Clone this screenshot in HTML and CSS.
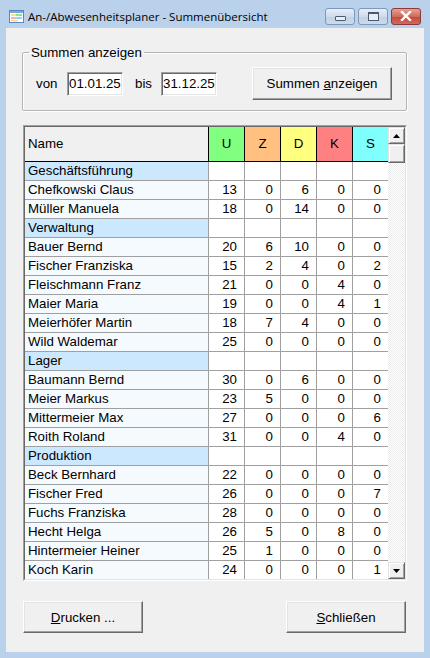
FILE: index.html
```html
<!DOCTYPE html>
<html lang="de">
<head>
    <meta charset="UTF-8">
    <meta name="viewport" content="width=device-width, initial-scale=1.0">
    <title>An-/Abwesenheitsplaner - Summenübersicht</title>
    <link rel="stylesheet" href="styles.css">
</head>
<body>
    <div class="window">
        <!-- Title bar -->
        <div class="titlebar">
            <svg class="app-icon" width="15" height="13" viewBox="0 0 15 13">
                <rect x="0.5" y="0.5" width="14" height="12" fill="#fff" stroke="#5b87c0"/>
                <rect x="1" y="1" width="13" height="2" fill="#7fa7dc"/>
                <rect x="2" y="4" width="5" height="2" fill="#ffe27a"/>
                <rect x="7" y="4" width="6" height="2" fill="#8fe08f"/>
                <rect x="2" y="7" width="4" height="2" fill="#ffb0a8"/>
                <rect x="6" y="7" width="7" height="2" fill="#8fd8f0"/>
                <rect x="2" y="10" width="7" height="1.5" fill="#ffd9a0"/>
            </svg>
            <span class="title">An-/Abwesenheitsplaner - Summenübersicht</span>
            <div class="caption-buttons">
                <span class="cap-btn"><span class="glyph-min"></span></span>
                <span class="cap-btn"><span class="glyph-max"></span></span>
                <span class="cap-btn cap-close">
                    <svg width="12" height="10" viewBox="0 0 12 10">
                        <path d="M2 1 L10 9 M10 1 L2 9" stroke="#fff" stroke-width="2.4" stroke-linecap="square"/>
                    </svg>
                </span>
            </div>
        </div>

        <div class="client">
            <!-- Date range -->
            <fieldset class="group">
                <legend>Summen anzeigen</legend>
                <div class="range-row">
                    <span class="lbl lbl-von">von</span>
                    <input class="date-input" type="text" value="01.01.25">
                    <span class="lbl lbl-bis">bis</span>
                    <input class="date-input" type="text" value="31.12.25">
                    <button class="btn btn-show">Summen <u>a</u>nzeigen</button>
                </div>
            </fieldset>

            <!-- Sums grid -->
            <div class="grid-frame">
                <div class="grid-inner">
                    <div class="grid-scroll">
                        <table class="sums">
                            <thead>
                                <tr>
                                    <th class="col-name">Name</th>
                                    <th class="col-u">U</th>
                                    <th class="col-z">Z</th>
                                    <th class="col-d">D</th>
                                    <th class="col-k">K</th>
                                    <th class="col-s">S</th>
                                </tr>
                            </thead>
                            <tbody id="rows"></tbody>
                        </table>
                    </div>
                    <div class="scrollbar">
                        <div class="sb-btn">
                            <svg width="7" height="4" viewBox="0 0 7 4"><polygon points="3.5,0 7,4 0,4" fill="#000"/></svg>
                        </div>
                        <div class="sb-thumb"></div>
                        <div class="sb-track"></div>
                        <div class="sb-btn">
                            <svg width="7" height="4" viewBox="0 0 7 4"><polygon points="0,0 7,0 3.5,4" fill="#000"/></svg>
                        </div>
                    </div>
                </div>
            </div>

            <!-- Footer buttons -->
            <div class="footer">
                <button class="btn btn-footer"><u>D</u>rucken ...</button>
                <button class="btn btn-footer"><u>S</u>chließen</button>
            </div>
        </div>
    </div>

    <script>
        // Groups with their employees: U, Z, D, K, S
        const data = [
            ['Geschäftsführung', [
                ['Chefkowski Claus', 13, 0, 6, 0, 0],
                ['Müller Manuela', 18, 0, 14, 0, 0]
            ]],
            ['Verwaltung', [
                ['Bauer Bernd', 20, 6, 10, 0, 0],
                ['Fischer Franziska', 15, 2, 4, 0, 2],
                ['Fleischmann Franz', 21, 0, 0, 4, 0],
                ['Maier Maria', 19, 0, 0, 4, 1],
                ['Meierhöfer Martin', 18, 7, 4, 0, 0],
                ['Wild Waldemar', 25, 0, 0, 0, 0]
            ]],
            ['Lager', [
                ['Baumann Bernd', 30, 0, 6, 0, 0],
                ['Meier Markus', 23, 5, 0, 0, 0],
                ['Mittermeier Max', 27, 0, 0, 0, 6],
                ['Roith Roland', 31, 0, 0, 4, 0]
            ]],
            ['Produktion', [
                ['Beck Bernhard', 22, 0, 0, 0, 0],
                ['Fischer Fred', 26, 0, 0, 0, 7],
                ['Fuchs Franziska', 28, 0, 0, 0, 0],
                ['Hecht Helga', 26, 5, 0, 8, 0],
                ['Hintermeier Heiner', 25, 1, 0, 0, 0],
                ['Koch Karin', 24, 0, 0, 0, 1]
            ]]
        ];

        const tbody = document.getElementById('rows');
        let html = '';
        data.forEach(([group, people]) => {
            html += '<tr class="group-row"><td class="name">' + group + '</td>' +
                '<td></td><td></td><td></td><td></td><td></td></tr>';
            people.forEach(p => {
                html += '<tr><td class="name">' + p[0] + '</td>';
                for (let i = 1; i < p.length; i++) {
                    html += '<td class="num">' + p[i] + '</td>';
                }
                html += '</tr>';
            });
        });
        tbody.innerHTML = html;
    </script>
</body>
</html>
```

FILE: styles.css
```css
/* Reset */
html, body {
    margin: 0;
    padding: 0;
}

body {
    width: 430px;
    height: 658px;
    overflow: hidden;
    background: #b9d1ea;
    font-family: "Liberation Sans", Arial, sans-serif;
    font-size: 13.3px;
    color: #000;
}

.window {
    display: flex;
    flex-direction: column;
    height: 658px;
}

/* Title bar */
.titlebar {
    height: 28px;
    box-sizing: border-box;
    padding: 4px 9px 0 9px;
    display: flex;
    align-items: center;
}

.app-icon {
    margin-right: 4px;
    flex-shrink: 0;
}

.title {
    font-family: "Open Sans", "Noto Sans", sans-serif;
    font-size: 11.5px;
    color: #000;
}

.caption-buttons {
    margin-left: auto;
    display: flex;
    gap: 3px;
}

.cap-btn {
    width: 30px;
    height: 17px;
    box-sizing: border-box;
    border: 1px solid #7d98b8;
    border-radius: 3px;
    background: linear-gradient(#e6eef8, #cfdcec 50%, #bfd1e6 51%, #ccdbec);
    display: flex;
    align-items: center;
    justify-content: center;
}

.cap-close {
    border-color: #8a3a3a;
    background: linear-gradient(#e5a092, #d26a5a 50%, #c2493a 51%, #cf6a5c);
}

.glyph-min {
    width: 9px;
    height: 3px;
    margin-top: 5px;
    border: 1px solid #4a5a70;
    border-radius: 1px;
    background: #e8eef5;
}

.glyph-max {
    box-sizing: border-box;
    width: 11px;
    height: 9px;
    border: 1px solid #4a5a70;
    border-top-width: 2px;
    background: #e8eef5;
}

/* Client area */
.client {
    flex: 1;
    margin: 0 6px 6px;
    background: #f0f0f0;
    padding: 17px 17px 0 16px;
    display: flex;
    flex-direction: column;
}

/* Group box */
.group {
    margin: 0;
    padding: 0;
    border: 1px solid #b4b4b4;
    border-radius: 2px;
    box-shadow: inset 1px 1px #fff, 1px 1px #fff;
}

.group legend {
    margin-left: 6px;
    padding: 0 2px;
    line-height: 15px;
}

.range-row {
    display: flex;
    align-items: center;
    padding: 7px 14px 10px 13px;
}

.lbl-von {
    width: 31px;
}

.lbl-bis {
    width: 26px;
    margin-left: 12px;
}

.date-input {
    width: 56px;
    height: 24px;
    box-sizing: border-box;
    margin: 0;
    padding: 0 0 0 1px;
    font: inherit;
    color: #000;
    background: #fff;
    border: 1px solid;
    border-color: #a0a0a0 #fff #fff #a0a0a0;
    box-shadow: inset 1px 1px #696969, inset -1px -1px #e3e3e3;
    outline: none;
}

/* Buttons */
.btn {
    font: inherit;
    color: #000;
    background: #f0f0f0;
    border: 1px solid;
    border-color: #fff #696969 #696969 #fff;
    box-shadow: inset -1px -1px #a0a0a0, inset 1px 1px #e3e3e3;
    padding: 0;
    margin: 0;
}

.btn-show {
    margin-left: auto;
    width: 140px;
    height: 33px;
}

/* Grid */
.grid-frame {
    margin: 14px 0 0 1px;
    border: 1px solid;
    border-color: #a0a0a0 #fff #fff #a0a0a0;
}

.grid-inner {
    display: flex;
    height: 452px;
    border: 1px solid;
    border-color: #696969 #e3e3e3 #e3e3e3 #696969;
    background: #fff;
    overflow: hidden;
}

.grid-scroll {
    flex: 1;
    overflow: hidden;
}

.sums {
    table-layout: fixed;
    border-collapse: separate;
    border-spacing: 0;
    width: 364px;
}

.sums th,
.sums td {
    padding: 0;
    font-weight: normal;
    white-space: nowrap;
    overflow: hidden;
}

.sums th {
    width: 35px;
    line-height: 34px;
    border-right: 1px solid #000;
    border-bottom: 1px solid #000;
    text-align: center;
}

.sums th.col-name {
    width: 180px;
    text-align: left;
    padding-left: 3px;
    background: #f0f0f0;
}

.col-u { background: #80ff80; }
.col-z { background: #ffc080; }
.col-d { background: #ffff80; }
.col-k { background: #ff8080; }
.col-s { background: #80ffff; }

.sums td {
    line-height: 18px;
    border-right: 1px solid #a0a0a0;
    border-bottom: 1px solid #a0a0a0;
    background: #fff;
}

.sums td.name {
    padding-left: 3px;
    background: #f5faff;
}

.sums .group-row td.name {
    background: #cce8ff;
}

.sums td.num {
    text-align: right;
    padding-right: 7px;
}

/* Scrollbar */
.scrollbar {
    width: 17px;
    flex-shrink: 0;
    display: flex;
    flex-direction: column;
}

.sb-btn,
.sb-thumb {
    box-sizing: border-box;
    background: #f0f0f0;
    border: 1px solid;
    border-color: #e3e3e3 #696969 #696969 #e3e3e3;
    box-shadow: inset 1px 1px #fff, inset -1px -1px #a0a0a0;
}

.sb-btn {
    height: 17px;
    display: flex;
    align-items: center;
    justify-content: center;
}

.sb-thumb {
    height: 19px;
}

.sb-track {
    flex: 1;
    background-color: #fff;
    background-image: repeating-conic-gradient(#ececec 0 25%, #fff 0 50%);
    background-size: 2px 2px;
}

/* Footer */
.footer {
    display: flex;
    justify-content: space-between;
    margin: 20px 1px 0 1px;
}

.btn-footer {
    width: 120px;
    height: 32px;
}
```
